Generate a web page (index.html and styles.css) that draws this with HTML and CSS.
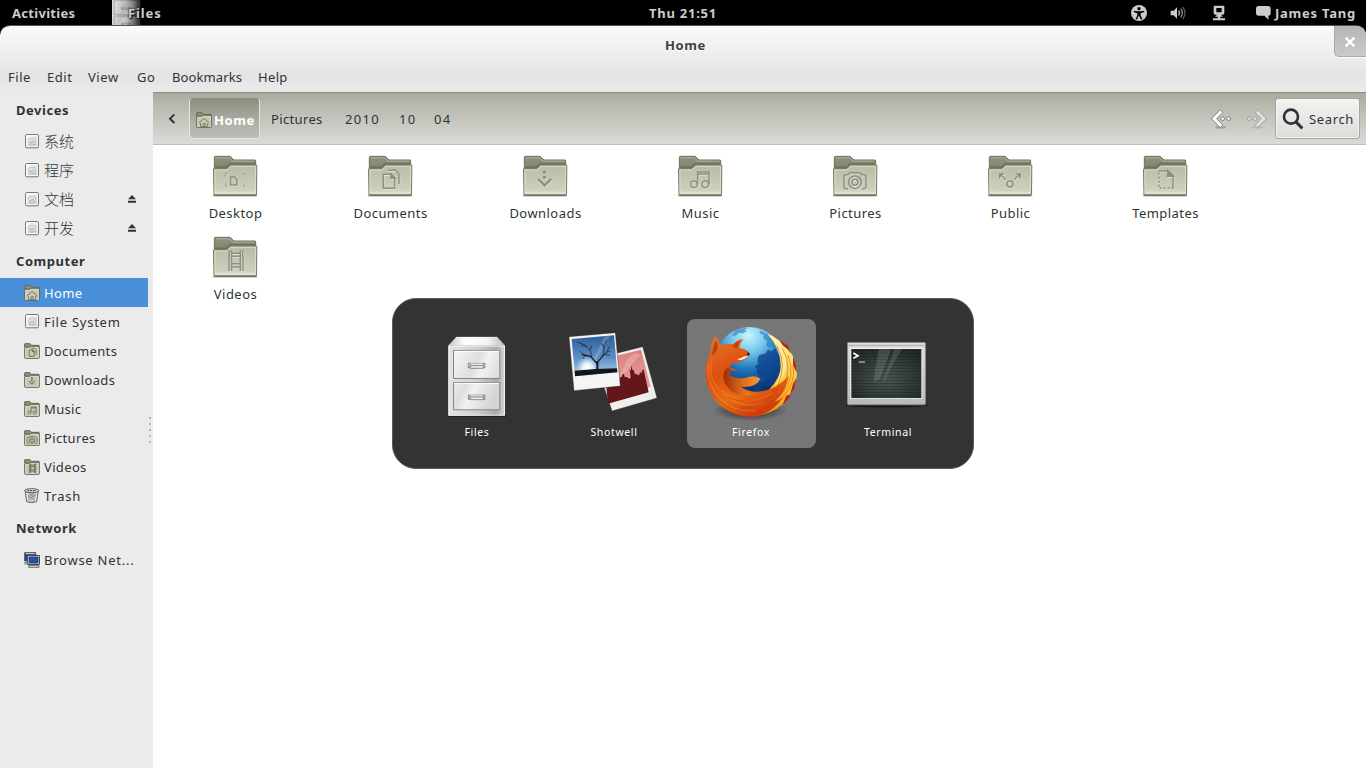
FILE: index.html
```html
<!DOCTYPE html>
<html lang="en">
<head>
<meta charset="utf-8">
<title>Home</title>
<link rel="stylesheet" href="styles.css">
</head>
<body>
<svg class="defs" width="0" height="0" aria-hidden="true">
  <defs>
    <linearGradient id="gBack" x1="0" y1="0" x2="0" y2="1"><stop offset="0" stop-color="#8f937e"/><stop offset="1" stop-color="#7d806c"/></linearGradient>
    <linearGradient id="gFront" x1="0" y1="0" x2="0" y2="1"><stop offset="0" stop-color="#b9bba4"/><stop offset=".8" stop-color="#cdcfbc"/><stop offset="1" stop-color="#dcdccb"/></linearGradient>
    <linearGradient id="gDisk" x1="0" y1="0" x2="1" y2="1"><stop offset="0" stop-color="#fff"/><stop offset="1" stop-color="#cfcfcf"/></linearGradient>
    <linearGradient id="gCab" x1="0" y1="0" x2="1" y2="0"><stop offset="0" stop-color="#e4e4e2"/><stop offset=".5" stop-color="#cfcfce"/><stop offset=".85" stop-color="#aaa"/><stop offset="1" stop-color="#d8d8d8"/></linearGradient>
    <linearGradient id="gTop" x1="0" y1="0" x2="1" y2="0"><stop offset="0" stop-color="#c5c5c5"/><stop offset=".3" stop-color="#fff"/><stop offset=".7" stop-color="#f4f4f4"/><stop offset="1" stop-color="#bbb"/></linearGradient>
    <linearGradient id="gDrawer" x1="0" y1="0" x2="1" y2=".6"><stop offset="0" stop-color="#f6f6f5"/><stop offset=".45" stop-color="#dededc"/><stop offset=".6" stop-color="#f2f2f1"/><stop offset="1" stop-color="#d4d4d2"/></linearGradient>
    <linearGradient id="gSky" x1="0" y1="0" x2="0" y2="1"><stop offset="0" stop-color="#2f5d9c"/><stop offset=".55" stop-color="#5d8ec4"/><stop offset="1" stop-color="#b4d0ea"/></linearGradient>
    <radialGradient id="gSun"><stop offset="0" stop-color="#fff"/><stop offset=".4" stop-color="#f4faff" stop-opacity=".9"/><stop offset="1" stop-color="#cfe3f5" stop-opacity="0"/></radialGradient>
    <linearGradient id="gRed" x1="0" y1="0" x2="0" y2="1"><stop offset="0" stop-color="#d98080"/><stop offset="1" stop-color="#f0a6a3"/></linearGradient>
    <radialGradient id="gGlobe" cx=".48" cy=".12" r=".85"><stop offset="0" stop-color="#c9f5ff"/><stop offset=".28" stop-color="#78c9ee"/><stop offset=".58" stop-color="#1e74bd"/><stop offset="1" stop-color="#08245f"/></radialGradient>
    <linearGradient id="gFox" x1="0" y1="0" x2=".5" y2="1"><stop offset="0" stop-color="#ea7626"/><stop offset=".45" stop-color="#dc4f10"/><stop offset=".75" stop-color="#e86b12"/><stop offset="1" stop-color="#cf3f0c"/></linearGradient>
    <linearGradient id="gTail" x1=".4" y1="0" x2=".2" y2="1"><stop offset="0" stop-color="#fff0a0"/><stop offset=".5" stop-color="#fbc637"/><stop offset="1" stop-color="#ee7c12"/></linearGradient>
    <linearGradient id="gPaw" x1="0" y1="0" x2="1" y2="0"><stop offset="0" stop-color="#9c2c08"/><stop offset=".5" stop-color="#dd6a1c"/><stop offset="1" stop-color="#f59a3d"/></linearGradient>
    <radialGradient id="gShade"><stop offset="0" stop-color="#000" stop-opacity=".75"/><stop offset="1" stop-color="#000" stop-opacity="0"/></radialGradient>
    <radialGradient id="gScreen" cx=".5" cy=".6" r=".65"><stop offset="0" stop-color="#4a5553"/><stop offset="1" stop-color="#222a29"/></radialGradient>
    <linearGradient id="gBezel" x1="0" y1="0" x2="0" y2="1"><stop offset="0" stop-color="#dcdcdc"/><stop offset="1" stop-color="#b9b9b9"/></linearGradient>
    <pattern id="scan" width="6" height="9" patternUnits="userSpaceOnUse"><rect width="6" height="3" fill="#111a18" opacity=".3"/></pattern>

    <symbol id="folder" viewBox="0 0 144 144">
      <rect x="5" y="127" width="134" height="7" rx="3" fill="#777" opacity=".4"/>
      <path d="M10 60V16q0-3 3-3h44l12 11h63q2 0 2 3v33z" fill="url(#gBack)" stroke="#6b6f5a" stroke-width="3"/>
      <path d="M15 17.500h40l11 10h64" fill="none" stroke="#adb19b" stroke-width="3"/>
      <path d="M12 46h34l12-11h74" fill="none" stroke="#5f634f" stroke-width="5" opacity=".6"/>
      <path d="M7.500 52q0-2 2-2h37l12-11h77q2 0 2 2l-1 87q0 2-2 2H11q-2 0-2-2z" fill="url(#gFront)" stroke="#74785f" stroke-width="3"/>
      <path d="M12 126V54h36l12-11h74l-1 83" fill="none" stroke="#e2e3d4" stroke-width="3" opacity=".75"/>
      <path d="M10 129h125" stroke="#595c4b" stroke-width="3"/>
      <path d="M12 122h121" stroke="#e9e9dd" stroke-width="6" opacity=".6"/>
    </symbol>
    <symbol id="folder-small" viewBox="0 0 48 48">
      <path d="M2 12V3q0-1 1-1h15l4 5h23v8z" fill="#8f937e" stroke="#62664f" stroke-width="3"/>
      <path d="M2 15q0-2 2-2h13l4-3h24q1 0 1 2v32q0 2-2 2H4q-2 0-2-2z" fill="#c6c8b4" stroke="#62664f" stroke-width="3"/>
      <path d="M5 43V16h13l4-3h21v30z" fill="none" stroke="#e4e5d6" stroke-width="2"/>
    </symbol>
    <g id="e-desktop"><path d="M59 75h11l8 9v15H59z"/><path d="M43 73v-8h8M94 65h8v8M43 95v8h8M102 95v8h-8" stroke-width="3" stroke-dasharray="5 3"/></g>
    <g id="e-documents"><path d="M52 67h24l10 11v31H52z"/><path d="M75 66v13h12z" class="solid"/><path d="M66 55h22l11 11v31"/></g>
    <g id="e-downloads"><path d="M66 57h9v8h-9zM66 72h9v8h-9z" class="solid" stroke="none"/><path d="M51 81l20 19 20-19" stroke-width="7"/></g>
    <g id="e-music"><circle cx="54" cy="97" r="10"/><circle cx="88" cy="97" r="10"/><path d="M65 96V60h34v36M65 66h34"/></g>
    <g id="e-pictures"><path d="M51 110h-6q-6 0-6-6V74q0-6 6-6h6l7-6h28l7 6h6q6 0 6 6v30q0 6-6 6h-6"/><circle cx="72" cy="91" r="19"/><circle cx="72" cy="91" r="9"/></g>
    <g id="e-public"><circle cx="72" cy="96" r="9"/><path d="M59 83L49 73M85 83l10-10"/><path d="M39 64h17l-17 17zM105 64H88l17 17z" class="solid" stroke="none"/></g>
    <g id="e-templates"><path d="M54 57h28l14 14v37"/><path d="M80 56v17h17z" class="solid"/><path d="M54 62v46h44" stroke-dasharray="6 6"/></g>
    <g id="e-videos"><path d="M53 51q4 10 1 20v43M97 51q-4 10-1 20v43M62 51v63M88 51v63M62 61h26M62 70h26v22H62zM62 102h26"/></g>
    <g id="e-home"><path d="M36 94l36-32 36 32M48 94v24h48V94M66 117V98h13v19"/></g>

    <symbol id="disk" viewBox="0 0 48 48">
      <rect x="4.500" y="1.500" width="39" height="40" rx="4" fill="url(#gDisk)" stroke="#777976" stroke-width="3"/>
      <rect x="8" y="5" width="32" height="32" fill="none" stroke="#fff" stroke-width="2"/>
      <ellipse cx="24" cy="20" rx="12" ry="8" fill="#e2e2e2" stroke="#b5b5b5" stroke-width="2"/>
      <path d="M13 32q10 3 22-1M16 27l9-5 5 1" stroke="#aaa" stroke-width="2.500" fill="none"/>
    </symbol>
    <symbol id="eject" viewBox="0 0 30 30"><path d="M15 3l12 13H3zM3 20h24v6H3z" fill="#2e3436"/></symbol>
    <symbol id="cabinet" viewBox="118 105 288 288">
      <rect x="173" y="372" width="176" height="9" rx="4" fill="#111" opacity=".55"/>
      <path d="M200 141h122l24 26H176z" fill="url(#gTop)" stroke="#eee" stroke-width="1"/>
      <path d="M176 167h170v210H176z" fill="url(#gCab)"/><path d="M177.500 376V168.500h167V375.500z" fill="none" stroke="#f7f7f7" stroke-width="3" opacity=".8"/>
      <g stroke="#858583" stroke-width="3" fill="url(#gDrawer)"><path d="M191.500 181.500h139v84h-139zM191.500 277.500h139v82h-139z"/></g>
      <path d="M194 184h134M194 280h134" stroke="#fff" stroke-width="3"/>
      <g fill="#eee" stroke="#777" stroke-width="2.500"><path d="M236 220h5v13h-5zM281 220h5v13h-5zM236 315h5v13h-5zM281 315h5v13h-5z"/><path d="M242 227h39v8h-39zM242 321h39v8h-39z"/></g>
      <path d="M243 220h37M243 315h37" stroke="#999" stroke-width="2"/>
    </symbol>
  </defs>
</svg>

<header class="panel">
  <span class="activities">Activities</span>
  <div class="app-menu"><span class="app-thumb"><svg width="48" height="48"><use href="#cabinet"/></svg></span><span class="app-name">Files</span></div>
  <span class="clock">Thu 21:51</span>
  <div class="status">
    <svg class="s-access" width="16" height="16" viewBox="0 0 48 48"><circle cx="24" cy="24" r="24" fill="#ccc"/><circle cx="24" cy="11" r="5"/><path d="M9 17l10 2h10l10-2 1 4-11 4v6l5 11-4 2-6-12h-1l-5 12-4-2 5-11v-6L8 21z"/></svg>
    <svg class="s-sound" width="16" height="16" viewBox="0 0 48 48"><path d="M2 17h9L21 7v34L11 31H2z" fill="#ccc"/><path d="M26 17q5 7 0 14" stroke="#bbb" stroke-width="4" fill="none"/><path d="M32 11q10 13 0 26" stroke="#888" stroke-width="4" fill="none"/><path d="M38 6q14 18 0 36" stroke="#555" stroke-width="4" fill="none"/></svg>
    <svg class="s-net" width="14" height="16" viewBox="0 0 42 48"><path d="M8 2h26q3 0 3 3v19q0 5-5 5h-5l6 6h-8v5h14v6H3v-6h14v-5H9l6-6h-5q-5 0-5-5V5q0-3 3-3zm5 7v13h16V9z" fill="#ccc" fill-rule="evenodd"/></svg>
    <svg class="s-chat" width="15" height="15" viewBox="0 0 45 45"><path d="M8 0h28q8 0 8 8v13q0 8-7 8l1 12-13-12H8q-8 0-8-8V8q0-8 8-8z" fill="#ccc"/></svg>
    <span class="user">James Tang</span>
  </div>
</header>

<main class="window">
  <div class="titlebar">
    <span class="win-title">Home</span>
    <button class="close" aria-label="Close"><svg width="12" height="12" viewBox="0 0 36 36"><path d="M5 5l26 26M31 5L5 31" stroke="#fff" stroke-width="7"/></svg></button>
  </div>
  <nav class="menubar"><span>File</span><span>Edit</span><span>View</span><span>Go</span><span>Bookmarks</span><span>Help</span></nav>

  <div class="body">
    <aside class="sidebar">
      <h2>Devices</h2>
      <div class="row"><svg><use href="#disk"/></svg><span class="cjk">系统</span></div>
      <div class="row"><svg><use href="#disk"/></svg><span class="cjk">程序</span></div>
      <div class="row"><svg><use href="#disk"/></svg><span class="cjk">文档</span><svg class="eject"><use href="#eject"/></svg></div>
      <div class="row"><svg><use href="#disk"/></svg><span class="cjk">开发</span><svg class="eject"><use href="#eject"/></svg></div>
      <h2>Computer</h2>
      <div class="row selected"><svg viewBox="0 0 48 48"><use href="#folder-small"/><use class="mini" href="#e-home"/></svg><span>Home</span></div>
      <div class="row"><svg><use href="#disk"/></svg><span class="wide">File System</span></div>
      <div class="row"><svg viewBox="0 0 48 48"><use href="#folder-small"/><use class="mini" href="#e-documents"/></svg><span>Documents</span></div>
      <div class="row"><svg viewBox="0 0 48 48"><use href="#folder-small"/><use class="mini" href="#e-downloads"/></svg><span>Downloads</span></div>
      <div class="row"><svg viewBox="0 0 48 48"><use href="#folder-small"/><use class="mini" href="#e-music"/></svg><span>Music</span></div>
      <div class="row"><svg viewBox="0 0 48 48"><use href="#folder-small"/><use class="mini" href="#e-pictures"/></svg><span>Pictures</span></div>
      <div class="row"><svg viewBox="0 0 48 48"><use href="#folder-small"/><use class="mini" href="#e-videos"/></svg><span>Videos</span></div>
      <div class="row"><svg viewBox="0 0 48 48"><path d="M3 6l5 35q15 6 30 0l5-35z" fill="#c6c6c6" stroke="#666" stroke-width="3"/><path d="M10 21l26 18M18 18l17 12M28 18l8 6M35 20L10 37M26 18L9 30" stroke="#888" stroke-width="2.500"/><path d="M8 12l4 28M38 12l-4 28" stroke="#f3f3f3" stroke-width="3"/><ellipse cx="23" cy="8" rx="21" ry="6" fill="#eee" stroke="#555" stroke-width="3"/><path d="M10 8h26" stroke="#444" stroke-width="4" stroke-dasharray="6 2"/></svg><span class="wide">Trash</span></div>
      <h2>Network</h2>
      <div class="row"><svg viewBox="0 0 48 48"><path d="M2 2h33v25H2z" fill="#204a87" stroke="#555753" stroke-width="3"/><path d="M5 5h27" stroke="#ddd" stroke-width="3"/><path d="M1 32h16M1 36h18" stroke="#777" stroke-width="3"/><path d="M11.500 10.500h35v27h-35z" fill="#eee" stroke="#44474a" stroke-width="3"/><path d="M16 15h26v18H16z" fill="#2a5699" stroke="#173d75" stroke-width="3"/><path d="M14 41h31v5H14z" fill="#eee" stroke="#555" stroke-width="2.500"/></svg><span class="wide">Browse Net...</span></div>
      <div class="grip"><i></i><i></i><i></i><i></i><i></i></div>
    </aside>

    <section class="pane">
      <div class="toolbar">
        <svg class="prev" width="8" height="12" viewBox="0 0 24 36"><path d="M19 4L6 17l13 13" fill="none" stroke="#2e3436" stroke-width="6"/></svg>
        <div class="crumb-home"><svg width="16" height="16" viewBox="0 0 48 48"><use href="#folder-small"/><use class="mini" href="#e-home"/></svg><b>Home</b></div>
        <span class="crumb c-pics">Pictures</span><span class="crumb c-year">2010</span><span class="crumb c-month">10</span><span class="crumb c-day">04</span>
        <div class="tools">
          <svg width="22" height="22" viewBox="0 0 66 66"><ellipse cx="32" cy="58" rx="17" ry="4" fill="#888" opacity=".6"/><path d="M35 9L12 32l23 23" stroke="#777" stroke-width="13" fill="none"/><g fill="#fff" stroke="#777" stroke-width="3"><circle cx="38" cy="32" r="5.500"/><circle cx="56" cy="32" r="5.500"/></g><path d="M34 10L12 32l22 22" stroke="#fff" stroke-width="9" fill="none"/></svg>
          <svg class="fwd" width="22" height="22" viewBox="0 0 66 66"><g transform="matrix(-1 0 0 1 66 0)"><ellipse cx="32" cy="58" rx="17" ry="4" fill="#888" opacity=".6"/><path d="M35 9L12 32l23 23" stroke="#777" stroke-width="13" fill="none"/><g fill="#fff" stroke="#777" stroke-width="3"><circle cx="38" cy="32" r="5.500"/><circle cx="56" cy="32" r="5.500"/></g><path d="M34 10L12 32l22 22" stroke="#fff" stroke-width="9" fill="none"/></g></svg>
          <button class="search"><svg width="22" height="22" viewBox="0 0 66 66"><circle cx="27" cy="26" r="21" fill="none" stroke="#2e3436" stroke-width="8"/><path d="M41 41l20 20" stroke="#2e3436" stroke-width="9"/></svg><span>Search</span></button>
        </div>
      </div>
      <div class="icons">
        <figure><svg viewBox="0 0 144 144"><use href="#folder"/><use class="hl" href="#e-desktop"/><use class="em" href="#e-desktop"/></svg><figcaption>Desktop</figcaption></figure>
        <figure><svg viewBox="0 0 144 144"><use href="#folder"/><use class="hl" href="#e-documents"/><use class="em" href="#e-documents"/></svg><figcaption>Documents</figcaption></figure>
        <figure><svg viewBox="0 0 144 144"><use href="#folder"/><use class="hl" href="#e-downloads"/><use class="em" href="#e-downloads"/></svg><figcaption>Downloads</figcaption></figure>
        <figure><svg viewBox="0 0 144 144"><use href="#folder"/><use class="hl" href="#e-music"/><use class="em" href="#e-music"/></svg><figcaption>Music</figcaption></figure>
        <figure><svg viewBox="0 0 144 144"><use href="#folder"/><use class="hl" href="#e-pictures"/><use class="em" href="#e-pictures"/></svg><figcaption>Pictures</figcaption></figure>
        <figure><svg viewBox="0 0 144 144"><use href="#folder"/><use class="hl" href="#e-public"/><use class="em" href="#e-public"/></svg><figcaption>Public</figcaption></figure>
        <figure><svg viewBox="0 0 144 144"><use href="#folder"/><use class="hl" href="#e-templates"/><use class="em" href="#e-templates"/></svg><figcaption>Templates</figcaption></figure>
        <figure><svg viewBox="0 0 144 144"><use href="#folder"/><use class="hl" href="#e-videos"/><use class="em" href="#e-videos"/></svg><figcaption>Videos</figcaption></figure>
      </div>
    </section>
  </div>
</main>

<div class="switcher">
  <div class="app"><svg><use href="#cabinet"/></svg><span>Files</span></div>
  <div class="app">
    <svg viewBox="530 105 288 288">
      <path d="M616 206l144-36 43 154-135 39z" fill="#eeeeec" stroke="#1e1e1e" stroke-opacity=".5" stroke-width="2"/>
      <path d="M628 211l127-32 29 111-122 34z" fill="url(#gRed)"/>
      <path d="M650 282l10-8 6 2 4-6 8 4 6-8 8 2v-6l5-1 2-9 5-1 2 9 9 2 3 4 6-3-3-22 4-1v-15l4 14 4 1 4 13 6-2 2 5 5-1 2-9 5 4 2-10 4-1 15 68-122 34z" fill="#64161a"/>
      <path d="M733 190l22 3-67 76 24-58z" fill="#fff" opacity=".2"/>
      <path d="M539 140l139-12 15 160-139 14z" fill="#f5f5f3" stroke="#222" stroke-opacity=".6" stroke-width="2"/>
      <path d="M547 147l127-11 10 111-127 12z" fill="url(#gSky)"/>
      <circle cx="594" cy="233" r="34" fill="url(#gSun)"/>
      <path d="M646 139l16-1-42 72-8-2z" fill="#fff" opacity=".18"/>
      <path d="M556 242l62-5 65-2 1 12-127 12z" fill="#14151a"/>
      <g fill="none" stroke="#17181d" stroke-linecap="round"><path d="M624 246v-30" stroke-width="6"/><path d="M624 222l-20-23-25-5M624 218l19-24" stroke-width="3.500"/><path d="M606 201l-2-18-17-18-22-9M602 180l6-13M592 169l-16-2M643 194l18-12M643 194l1-29 8-14M644 172l-8-12M643 193l17 3M586 196l-14-12M588 196l-8 10M652 187l8-17" stroke-width="2"/></g>
    </svg><span>Shotwell</span>
  </div>
  <div class="app active">
    <svg viewBox="70 105 288 288">
      <ellipse cx="212" cy="360" rx="112" ry="34" fill="url(#gShade)"/>
      <circle cx="210" cy="215" r="104" fill="url(#gGlobe)"/>
      <path d="M168 121q18-9 36-7l-10 6 8 4-14 6-11-2-6 8-15 2zM240 122q34 12 52 43l-8 12-9-8-7 6-9-10 3-13-12-8 3-9-12-5z" fill="#2d7fb8" opacity=".65"/>
      <path d="M238 196l20-6 7-11 11 4 10-8 14 24 1 50-24 38-15 5-8-11 4-18-16-3-11-12 1-12-8-6 12-8-3-12zM218 302l14-9 13 5 17-4-16 20-27 2z" fill="#0c3f89" opacity=".75"/>
      <path d="M264 132q18 5 31 17 30 16 43 46 17 38 13 66-4 35-19 51-22 40-62 55-57 25-115-10l80-33q53-32 67-80 8-59-38-112z" fill="url(#gTail)"/>
      <path d="M298 150l26 16 11 26q-10-16-24-24zM340 200q12 24 11 48l-11-22zM349 265q0 32-18 49l9-33zM333 313q-9 22-24 31l11-27z" fill="#b52814"/>
      <path d="M264 132q35 29 40 80 2 44-21 81 43-34 35-94-9-43-54-67z" fill="#fff0a2" opacity=".75"/>
      <g fill="none" stroke="#df7711" stroke-width="3" opacity=".8"><path d="M291 167q31 54 6 112-20 42-66 65M307 173q38 66-2 127-24 34-67 55M325 195q26 68-19 118-24 26-54 42M340 226q11 57-37 101"/></g>
      <path d="M105 139q13 8 16 25 21-3 40-2 12-13 29-15-9 11-11 27 21 4 30 14 1 11-13 20-16 11-28 10-17 2-17 12 7 8 24 9-13 7-27-2-9 11 2 26 17 17 30 25 33 24 73 15 40-10 74-45-7 47-43 78 16-6 26-14-32 48-82 58-59 5-103-31Q78 307 78 252q-4-27 14-62 0-25 13-51z" fill="url(#gFox)"/>
      <path d="M132 249q5-20 25-18-12 5-3 27 26 13 52 3 24-6 36 6-11 18-29 22-22 4-36 0 14 19 45 22-49 14-73-13-22-22-17-49z" fill="url(#gPaw)"/>
      <path d="M108 151q7 13 7 24l-17 24q-1-25 10-48zM182 152q-10 12-9 23l-14-5q5-14 23-18z" fill="#9f2c0b" opacity=".65"/>
      <path d="M173 207q10-2 18-7l15-3q-10 11-27 14z" fill="#fff1df"/><path d="M202 188l8 1-1 8-6-2z" fill="#222"/>
      <path d="M88 220q-10 58 31 106 43 42 110 36M98 205q-19 66 35 109 48 42 119 26M91 270q15 59 78 91M126 300q61 58 151 9" fill="none" stroke="#f8942f" stroke-width="4" opacity=".4"/>
      <path d="M140 322q75 30 155-28-44 66-120 60M102 315q46 55 124 52" fill="none" stroke="#b83408" stroke-width="3" opacity=".4"/>
    </svg><span>Firefox</span>
  </div>
  <div class="app">
    <svg viewBox="482 105 288 288">
      <ellipse cx="622" cy="345" rx="124" ry="7" fill="#111"/>
      <rect x="504.500" y="157.500" width="234" height="187" rx="3" fill="url(#gBezel)" stroke="#8b8788" stroke-width="3"/>
      <path d="M508 166h228" stroke="#aaa" stroke-width="3"/>
      <rect x="513" y="174" width="216" height="152" fill="#f2f2f2"/><rect x="516" y="177" width="210" height="147" fill="url(#gScreen)"/><rect x="516" y="177" width="210" height="147" fill="url(#scan)"/>
      <path d="M598 177h38l-34 90-20 10zM645 177h22l-61 110z" fill="#fff" opacity=".13"/>
      <path d="M522 189l14 8-14 8" fill="none" stroke="#fff" stroke-width="5"/><path d="M538 216h19" stroke="#ddd" stroke-width="3"/>
    </svg><span>Terminal</span>
  </div>
</div>
</body>
</html>
```
FILE: styles.css
```css
* { box-sizing: border-box; }
body {
  margin: 0; width: 1366px; height: 768px; overflow: hidden; background: #000;
  font-family: "Noto Sans", "Noto Sans CJK SC", sans-serif; font-size: 13px; letter-spacing: .35px; line-height: 20px; color: #2e3436;
  display: flex; flex-direction: column; position: relative;
}
.defs { position: absolute; }
svg { display: block; flex: none; }
button { font: inherit; letter-spacing: inherit; color: inherit; padding: 0; margin: 0; }

.panel { height: 25px; flex: none; display: flex; align-items: center; position: relative; color: #ccc; font-weight: 700; font-size: 13px; padding: 1px 11px 0 12px; }
.activities { width: 100px; letter-spacing: .3px; }
.app-menu { display: flex; height: 25px; margin-top: -1px; }
.app-thumb { width: 29px; height: 25px; overflow: hidden; position: relative; flex: none; margin-right: -13px; }
.app-thumb svg { margin: -12px 0 0 -10px; }
.app-thumb::after { content: ""; position: absolute; inset: 0; background: linear-gradient(90deg, rgba(0,0,0,.05), rgba(0,0,0,.2) 50%, rgba(0,0,0,.8)); }
.app-name { position: relative; padding-top: 3px; letter-spacing: .9px; text-shadow: 0 0 2px #000, 1px 1px 1px #000; }
.clock { position: absolute; left: 0; right: 0; text-align: center; letter-spacing: .75px; }
.status { margin-left: auto; display: flex; align-items: center; }
.s-access { margin-right: 23px; }
.s-sound { margin-right: 26px; }
.s-net { margin-right: 30px; }
.s-chat { margin-right: 4px; }
.user { width: 80px; letter-spacing: .75px; white-space: nowrap; }

.window { flex: 1; border-top: 1px solid #4a5663; border-radius: 10px 10px 0 0; display: flex; flex-direction: column; min-height: 0; background: linear-gradient(#fafafa, #e4e4e4 50px, #ebebeb 67px); }
.titlebar { height: 37px; display: flex; justify-content: center; position: relative; }
.win-title { font-weight: 700; padding: 9px 0 0 5px; color: #3c4143; letter-spacing: .6px; text-shadow: 0 1px #fff; }
.close { position: absolute; right: 0; top: 0; width: 32px; height: 31px; border: 1px solid #a5a7a8; border-top: 0; border-right: 0; border-radius: 0 9px 0 5px; background: linear-gradient(#b4b6b6, #c9caca); display: grid; place-items: center; padding: 2px 1px 0 0; box-shadow: 0 1px #fff; }
.menubar { height: 29px; display: grid; grid-template-columns: 39px 41px 49px 35px 86px auto; padding: 4px 8px; }
.menubar span:nth-child(-n+4) { letter-spacing: .55px; }
.menubar span:nth-child(5) { letter-spacing: .1px; }

.body { flex: 1; display: flex; min-height: 0; }
.sidebar { width: 153px; background: #ebebeb; position: relative; flex: none; }
.sidebar h2 { margin: 0; height: 35px; padding: 8px 0 0 16px; font-size: 13px; letter-spacing: .55px; line-height: 20px; font-weight: 700; }
.row { height: 29px; width: 148px; display: flex; align-items: center; padding: 1px 0 0 24px; gap: 4px; white-space: nowrap; }
.row svg { width: 16px; height: 16px; }
.row > span { flex: 1; }
.row .cjk { font-family: "Noto Sans CJK SC", sans-serif; font-size: 15px; font-weight: 300; letter-spacing: 0; position: relative; top: -1px; }
.row .wide { letter-spacing: .75px; }
.row svg.eject { width: 10px; height: 10px; margin: -2px 11px 0 0; }
.selected { background: #4a90d9; color: #fff; }
.mini { transform: translate(-8px, -9px) scale(.45); fill: none; stroke: #6f735c; stroke-width: 6; }
.grip { position: absolute; left: 149px; top: 325px; display: grid; gap: 4px; }
.grip i { width: 2px; height: 2px; background: #b6b6ad; }

.pane { flex: 1; background: #fff; display: flex; flex-direction: column; }
.toolbar { height: 53px; border-top: 1px solid #8b8c87; border-bottom: 1px solid #bcbcba; background: linear-gradient(#a9a99d, #b9b9af 25%, #dadad8); display: flex; align-items: center; }
.prev { margin-left: 15px; margin-right: 13px; }
.crumb-home { width: 71px; height: 41px; margin-top: -1px; padding: 3px 0 0 6px; display: flex; align-items: center; gap: 2px; border: 1px solid #e4e4df; border-top-color: #8d8e7f; border-radius: 4px; background: linear-gradient(#8d8e7f, #aeafa5 60%, #bcbdb5); color: #fff; letter-spacing: .6px; }
.c-pics { margin-left: 11px; width: 74px; }
.c-year { width: 54px; letter-spacing: 1.300px; }
.c-month { width: 35px; letter-spacing: 1.300px; }
.c-day { letter-spacing: 1.300px; }
.tools { margin-left: auto; margin-right: 6px; display: flex; align-items: center; }
.fwd { opacity: .5; margin: 0 7px 0 14px; }
.search { width: 85px; height: 41px; display: flex; align-items: center; gap: 5px; padding-left: 6px; border: 1px solid #a4a5a0; border-radius: 3px; background: linear-gradient(#f3f4f2, #dcdddb); box-shadow: inset 0 0 0 1px #f4f4f3; letter-spacing: .65px; }
.icons { display: grid; grid-template-columns: repeat(7, 155px); grid-auto-rows: 81px; padding: 7px 0 0 4px; }
.icons figure { margin: 0; display: flex; flex-direction: column; align-items: center; gap: 3px; }
.icons figcaption { padding-left: 2px; letter-spacing: .45px; }
.icons svg { width: 48px; height: 48px; }
.solid { fill: currentColor; }
.em { fill: none; stroke: #8c8f81; color: #8c8f81; stroke-width: 4.500; }
.hl { fill: none; stroke: #e3e4d7; color: #e3e4d7; stroke-width: 4.500; transform: translate(1.500px, 2.500px); }

.switcher { position: absolute; left: 392px; top: 298px; width: 582px; height: 171px; border-radius: 24px; border: 1px solid #5b5b5b; background: #333; display: flex; gap: 8px; padding: 20px; color: #fff; font-size: 10.500px; letter-spacing: .65px; }
.app { width: 129px; height: 129px; border-radius: 8px; display: flex; flex-direction: column; align-items: center; padding: 6px 1px 0 0; line-height: 16px; gap: 3px; }
.app svg { width: 96px; height: 96px; }
.active { background: #767676; }
```
